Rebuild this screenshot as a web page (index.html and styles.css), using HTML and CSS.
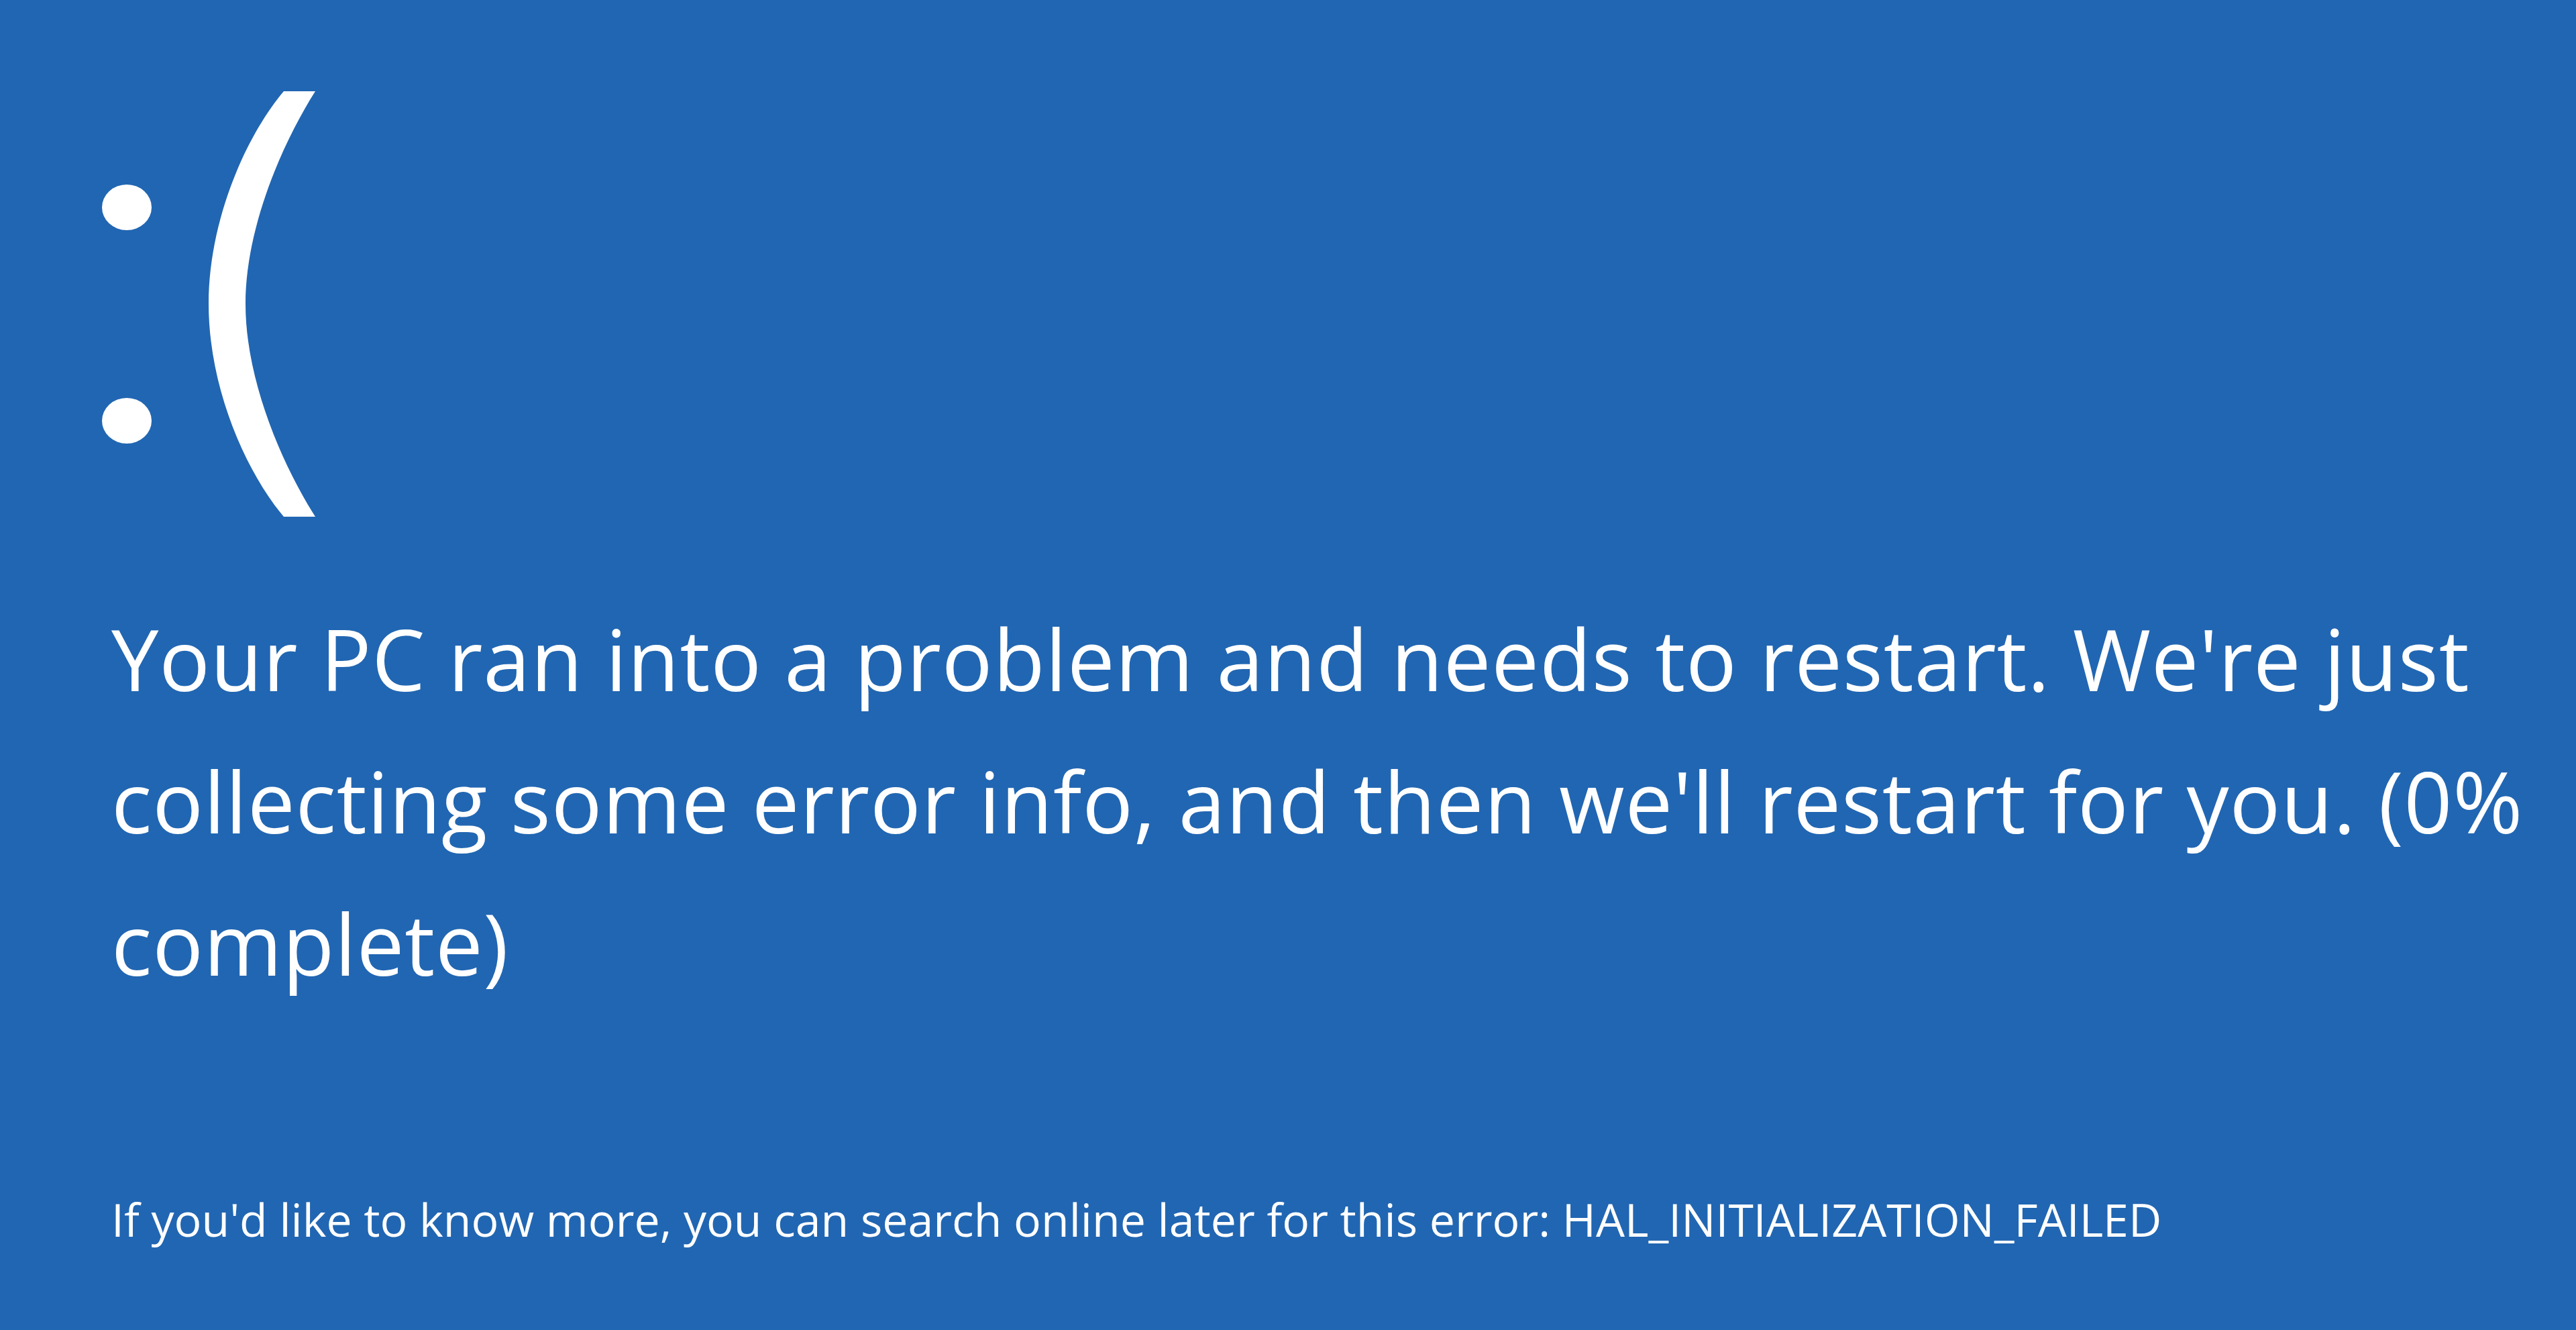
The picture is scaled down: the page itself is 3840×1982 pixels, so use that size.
FILE: index.html
```html
<!DOCTYPE html>
<html lang="en">
<head>
<meta charset="utf-8">
<title>Your PC ran into a problem</title>
<link rel="stylesheet" href="styles.css">
</head>
<body>
<main class="screen">
  <svg class="face" viewBox="0 0 520 800" width="520" height="800" aria-label=":(">
    <ellipse cx="189" cy="309" rx="37" ry="34" fill="#ffffff"/>
    <ellipse cx="189" cy="627" rx="37" ry="34" fill="#ffffff"/>
    <path d="M423 136 C365 205 311 330 311 453 C311 576 365 701 423 770 L470 770 C420 691 366 566 366 453 C366 340 420 215 470 136 Z" fill="#ffffff"/>
  </svg>
  <p class="message">Your PC ran into a problem and needs to restart. We're just collecting some error info, and then we'll restart for you. (0% complete)</p>
  <p class="details">If you'd like to know more, you can search online later for this error: HAL_INITIALIZATION_FAILED</p>
</main>
</body>
</html>
```
FILE: styles.css
```css
html, body {
  margin: 0;
  padding: 0;
}
body {
  background: #2166b2;
  color: #ffffff;
  font-family: "Open Sans", "Noto Sans", "Liberation Sans", sans-serif;
  min-height: 100vh;
  overflow: hidden;
}
.screen {
  display: flex;
  flex-direction: column;
  align-items: flex-start;
}
.face {
  display: block;
  margin: 0;
}
.message {
  margin: 75px 0 0 166px;
  max-width: 3660px;
  font-size: 126px;
  font-weight: 400;
  letter-spacing: 0.8px;
  line-height: 212px;
}
.details {
  margin: 266px 0 0 166px;
  font-size: 68px;
  font-weight: 400;
  line-height: 80px;
}
```
